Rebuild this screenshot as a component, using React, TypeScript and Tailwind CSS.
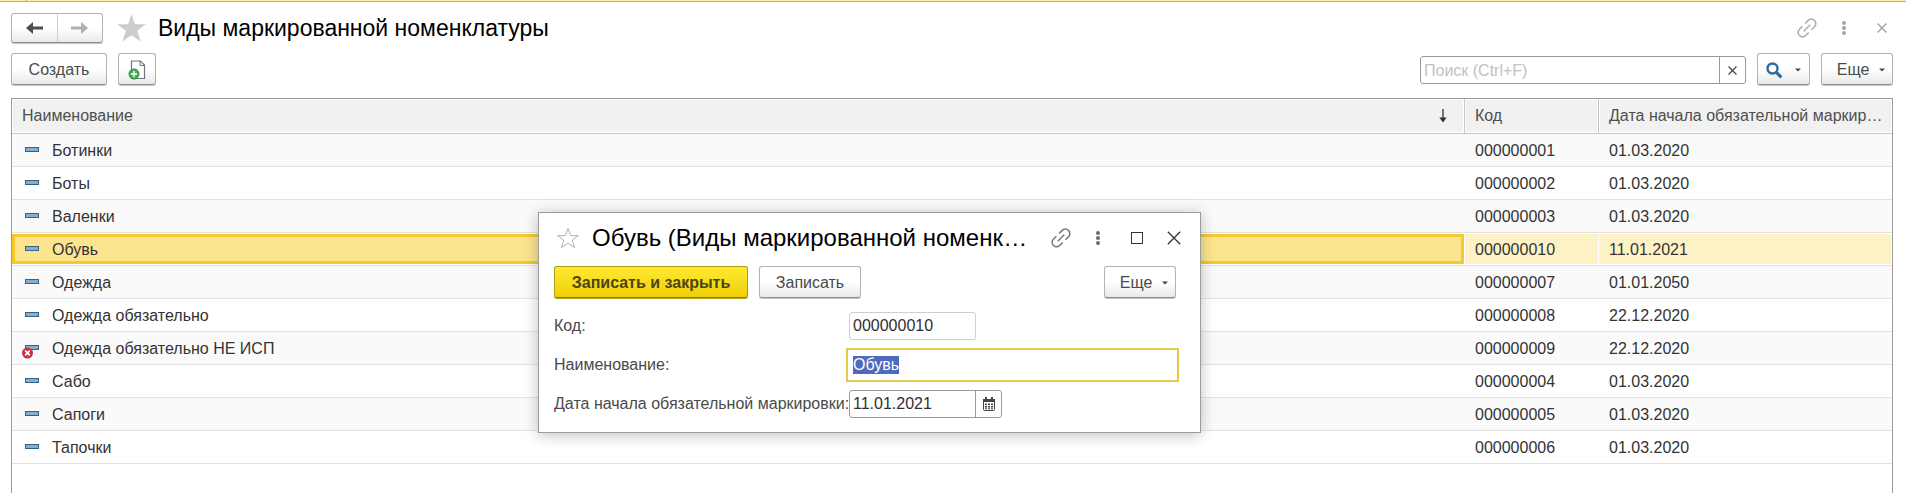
import { useEffect, useRef } from "react";
import type { ReactNode } from "react";

type Item = { name: string; code: string; date: string; disabled?: boolean };

const items: Item[] = [
  { name: "Ботинки", code: "000000001", date: "01.03.2020" },
  { name: "Боты", code: "000000002", date: "01.03.2020" },
  { name: "Валенки", code: "000000003", date: "01.03.2020" },
  { name: "Обувь", code: "000000010", date: "11.01.2021" },
  { name: "Одежда", code: "000000007", date: "01.01.2050" },
  { name: "Одежда обязательно", code: "000000008", date: "22.12.2020" },
  { name: "Одежда обязательно НЕ ИСП", code: "000000009", date: "22.12.2020", disabled: true },
  { name: "Сабо", code: "000000004", date: "01.03.2020" },
  { name: "Сапоги", code: "000000005", date: "01.03.2020" },
  { name: "Тапочки", code: "000000006", date: "01.03.2020" },
];
const selectedCode = "000000010";

const buttonFace =
  "rounded-[3px] border border-[#b3b3b3] border-b-[#8f8f8f] bg-linear-to-b from-white from-50% to-[#e9e9e9] shadow-[0_1px_0_#c4c4c4] text-[#4a4a4a]";

function Button({ label, className, children }: { label?: string; className: string; children: ReactNode }) {
  return (
    <button type="button" aria-label={label} className={`flex h-8 shrink-0 items-center justify-center pt-[2px] ${buttonFace} ${className}`}>
      {children}
    </button>
  );
}

function Arrow({ className }: { className: string }) {
  return (
    <svg className={className} width="17" height="12" viewBox="0 0 17 12">
      <path d="M0 6 7 0v4.500H17v3H7V12z" fill="currentColor" />
    </svg>
  );
}

function Caret() {
  return (
    <svg width="6" height="4" viewBox="0 0 6 4">
      <path d="M0 .5h6L3 3.500z" fill="#444" />
    </svg>
  );
}

function LinkIcon({ color }: { color: string }) {
  return (
    <svg width="20" height="20" viewBox="0 0 20 20" fill="none" stroke={color} strokeWidth="1.500">
      <path d="M8.200 5.400 11.200 2.400a4.400 4.400 0 0 1 6.300 0 4.400 4.400 0 0 1 0 6.300L14.500 11.700" />
      <path d="M5.400 8.200 2.400 11.200a4.400 4.400 0 0 0 0 6.300 4.400 4.400 0 0 0 6.300 0L11.700 14.500" />
      <path d="M6.800 13.200l6.400-6.400" />
    </svg>
  );
}

function DotsIcon({ color }: { color: string }) {
  return (
    <svg width="6" height="16" viewBox="0 0 6 16" fill={color}>
      <circle cx="3" cy="3" r="2" />
      <circle cx="3" cy="8" r="2" />
      <circle cx="3" cy="13" r="2" />
    </svg>
  );
}

function Cross({ size, color, width }: { size: number; color: string; width: number }) {
  return (
    <svg width={size} height={size} viewBox="0 0 12 12" stroke={color} strokeWidth={width} fill="none">
      <path d="M.7.7l10.600 10.600M11.300.7.7 11.300" />
    </svg>
  );
}

function NewDocIcon() {
  return (
    <svg width="18" height="20" viewBox="0 0 18 20" fill="none">
      <path d="M3.500 1h9l4 4v13.500h-13z" fill="#fff" stroke="#6a7683" strokeWidth="1.200" />
      <path d="M12 1v4.500h4.500" stroke="#6a7683" />
      <circle cx="6" cy="14" r="5" fill="#4aae57" stroke="#23903a" />
      <path d="M6 10.800v6.400M2.800 14h6.400" stroke="#fff" strokeWidth="1.300" />
    </svg>
  );
}

function SearchIcon() {
  return (
    <svg width="17" height="17" viewBox="0 0 17 17" fill="none" stroke="#2c6ca0">
      <circle cx="6.500" cy="6.500" r="5" strokeWidth="2.400" />
      <path d="m10.300 10.300 5 5" strokeWidth="3.200" />
    </svg>
  );
}

function ItemIcon({ disabled }: { disabled?: boolean }) {
  return (
    <svg className="shrink-0" width="18" height="20" viewBox="0 0 18 20">
      <rect x="3.500" y="6.500" width="13" height="4" fill="#86aed0" stroke="#38607f" />
      {disabled && (
        <>
          <circle cx="5.500" cy="14" r="5.500" fill="#c8323c" />
          <path d="m3.200 11.700 4.600 4.600M7.800 11.700l-4.600 4.600" stroke="#fff" strokeWidth="1.700" />
        </>
      )}
    </svg>
  );
}

function CalendarIcon() {
  return (
    <svg width="12" height="14" viewBox="0 0 12 14">
      <rect x=".5" y="2.500" width="11" height="11" rx="1" fill="#fff" stroke="#444" />
      <path d="M0 2h12v3H0zM2 0h2v3H2zM8 0h2v3H8z" fill="#444" />
      <path d="M2 6.500h2v1.500H2zM5 6.500h2v1.500H5zM8 6.500h2v1.500H8zM2 9h2v1.500H2zM5 9h2v1.500H5zM8 9h2v1.500H8zM2 11.300h2v1H2zM5 11.300h2v1H5zM8 11.300h2v1H8z" fill="#444" />
    </svg>
  );
}

function Row({ item, odd }: { item: Item; odd: boolean }) {
  const selected = item.code === selectedCode;
  const cell = `h-[33px] border-b border-[#e2e2e2] p-0 ${odd ? "bg-[#fafafa]" : "bg-white"}`;
  const fill = selected ? "my-px mr-px h-[30px] bg-[#fdf2c6]" : "h-8";
  return (
    <tr aria-selected={selected}>
      <td className={cell}>
        <div
          className={`flex items-center gap-3 pt-[2px] ${
            selected ? "my-px mr-px h-[30px] border-3 border-[#f4c92c] bg-[#fde58f] pl-[7px]" : "h-8 pl-[10px]"
          }`}
        >
          <ItemIcon disabled={item.disabled} />
          <span className="truncate">{item.name}</span>
        </div>
      </td>
      <td className={cell}>
        <div className={`flex items-center pt-[2px] pl-[10px] ${fill}`}>{item.code}</div>
      </td>
      <td className={cell}>
        <div className={`flex items-center pt-[2px] pl-[10px] ${fill}`}>{item.date}</div>
      </td>
    </tr>
  );
}

function EditDialog() {
  const nameRef = useRef<HTMLInputElement>(null);
  useEffect(() => {
    nameRef.current?.focus();
    nameRef.current?.select();
  }, []);

  return (
    <section
      role="dialog"
      aria-labelledby="dialog-title"
      className="absolute top-[212px] left-[538px] w-[663px] border border-[#9c9c9c] bg-white px-[15px] pt-[7px] pb-[9px] shadow-[0_2px_14px_rgba(0,0,0,0.25)]"
    >
      <header className="flex h-9 items-center pr-1">
        <button type="button" aria-label="Добавить в избранное" className="mr-3 ml-[2px]">
          <svg width="24" height="22" viewBox="0 0 24 22" fill="none" stroke="#b0b0b0">
            <path d="m12 1.500 2.600 7.200h7.800l-6.200 4.600 2.300 7.300L12 16.200l-6.500 4.400 2.300-7.300-6.200-4.600h7.800z" />
          </svg>
        </button>
        <h2 id="dialog-title" className="min-w-0 flex-1 truncate text-2xl text-black">
          Обувь (Виды маркированной номенклатуры)
        </h2>
        <div className="ml-5 flex items-center">
          <button type="button" aria-label="Получить ссылку" className="mr-6"><LinkIcon color="#777" /></button>
          <button type="button" aria-label="Меню" className="mr-[30px]"><DotsIcon color="#6b6b6b" /></button>
          <button type="button" aria-label="Развернуть" className="mr-6 size-3 border border-[#333]" />
          <button type="button" aria-label="Закрыть"><Cross size={14} color="#333" width={1.1} /></button>
        </div>
      </header>

      <div className="mt-[10px] flex items-center">
        <button
          type="button"
          className="mr-[11px] h-8 w-[194px] rounded-[3px] border border-[#b09c12] border-b-[#8a7a10] bg-linear-to-b from-[#ffe92e] to-[#efd000] pt-[2px] font-bold text-[#4c450f] shadow-[0_1px_0_#b5a52c]"
        >
          Записать и закрыть
        </button>
        <Button className="w-[102px]">Записать</Button>
        <Button className="mr-[9px] ml-auto w-[72px] gap-[10px] pl-2">Еще <Caret /></Button>
      </div>

      <form className="mt-2 grid grid-cols-[292px_1fr] items-center text-[#4a4a4a]">
        <label htmlFor="code" className="whitespace-nowrap">Код:</label>
        <div className="flex h-[39px] items-center pl-[3px]">
          <input id="code" readOnly value="000000010" className="h-7 w-[127px] rounded-[3px] border border-[#cfcfcf] px-[3px] text-[#2f2f2f] outline-none" />
        </div>
        <label htmlFor="name" className="whitespace-nowrap">Наименование:</label>
        <div className="flex h-[39px] items-center pr-[6px]">
          <input
            id="name"
            ref={nameRef}
            defaultValue="Обувь"
            className="h-[34px] w-full border-2 border-[#e6c84c] px-[5px] text-[#2f2f2f] outline-none selection:bg-[#4f69bd] selection:text-white"
          />
        </div>
        <label htmlFor="date" className="whitespace-nowrap">Дата начала обязательной маркировки:</label>
        <div className="flex h-[39px] items-center pl-[3px]">
          <div className="flex h-7 w-[153px] overflow-hidden rounded-[3px] border border-[#9a9a9a]">
            <input id="date" defaultValue="11.01.2021" className="min-w-0 flex-1 px-[3px] text-[#2f2f2f] outline-none" />
            <button type="button" aria-label="Выбрать дату" className="flex w-[26px] items-center justify-center border-l border-[#9a9a9a]">
              <CalendarIcon />
            </button>
          </div>
        </div>
      </form>
    </section>
  );
}

export default function App() {
  return (
    <div className="relative flex h-screen min-w-[1210px] flex-col overflow-hidden bg-white font-['Liberation_Sans',Arial,sans-serif] text-base leading-5 text-[#333]">
      <div className="flex h-[2px] shrink-0 border-b border-[#c9b559] bg-[#fbee9d]">
        <div className="w-[27px] border-r border-[#c9b559]" />
      </div>

      <header className="flex h-[51px] shrink-0 items-center pr-[19px] pl-[11px]">
        <div className={`flex h-[30px] w-[92px] shrink-0 ${buttonFace}`}>
          <button type="button" aria-label="Назад" className="flex flex-1 items-center justify-center border-r border-[#d0d0d0]">
            <Arrow className="text-[#4d4d4d]" />
          </button>
          <button type="button" aria-label="Вперед" className="flex flex-1 items-center justify-center">
            <Arrow className="rotate-180 text-[#b0b0b0]" />
          </button>
        </div>
        <button type="button" aria-label="Избранное" className="mr-3 ml-[14px] shrink-0">
          <svg width="29" height="28" viewBox="0 0 27 28" preserveAspectRatio="none">
            <path d="m13.500 0 3.200 10.300H27l-8.200 6.500 3.300 10.700-8.600-6.300-8.600 6.300 3.300-10.700L0 10.300h10.300z" fill="#cdcdcd" />
          </svg>
        </button>
        <h1 className="min-w-0 flex-1 truncate text-[23px] leading-7 text-black">Виды маркированной номенклатуры</h1>
        <div className="flex items-center">
          <button type="button" aria-label="Получить ссылку" className="mr-6"><LinkIcon color="#ababab" /></button>
          <button type="button" aria-label="Меню" className="mr-[30px]"><DotsIcon color="#a3a3a3" /></button>
          <button type="button" aria-label="Закрыть"><Cross size={10} color="#a8a8a8" width={1.8} /></button>
        </div>
      </header>

      <div className="flex h-[45px] shrink-0 items-start pr-[13px] pl-[11px]">
        <Button className="mr-[11px] w-24">Создать</Button>
        <Button label="Создать новый документ" className="w-[38px]"><NewDocIcon /></Button>
        <div className="mt-[3px] ml-auto flex h-7 w-[326px] overflow-hidden rounded-[3px] border border-[#9a9a9a]">
          <input
            type="text"
            aria-label="Поиск"
            placeholder="Поиск (Ctrl+F)"
            className="min-w-0 flex-1 px-[3px] pt-[2px] outline-none placeholder:text-[#c2c2c2]"
          />
          <button type="button" aria-label="Очистить" className="flex w-[26px] items-center justify-center border-l border-[#9a9a9a]">
            <Cross size={9} color="#444" width={1.6} />
          </button>
        </div>
        <Button label="Найти" className="ml-[11px] w-[53px] gap-3"><SearchIcon /><Caret /></Button>
        <Button className="ml-[11px] w-[72px] gap-[10px] pl-2">Еще <Caret /></Button>
      </div>

      <main className="mr-[13px] ml-[11px] flex-1 border border-b-0 border-[#9a9a9a]">
        <table className="w-full table-fixed border-separate border-spacing-0">
          <colgroup>
            <col />
            <col className="w-[134px]" />
            <col className="w-[293px]" />
          </colgroup>
          <thead>
            <tr className="text-left text-[#4f4f4f]">
              <th className="h-[35px] border-r border-b border-[#c6c6c6] p-px font-normal">
                <div className="flex h-8 items-center justify-between bg-[#f1f1f1] pr-4 pl-[9px]">
                  Наименование
                  <svg width="8" height="14" viewBox="0 0 8 14">
                    <path d="M4 0v12" stroke="#333" strokeWidth="1.300" />
                    <path d="M.3 8.500h7.400L4 13.500z" fill="#333" />
                  </svg>
                </div>
              </th>
              <th className="h-[35px] border-r border-b border-[#c6c6c6] p-px font-normal">
                <div className="flex h-8 items-center bg-[#f1f1f1] pl-[9px]">Код</div>
              </th>
              <th className="h-[35px] border-b border-[#c6c6c6] p-px font-normal">
                <div className="h-8 truncate bg-[#f1f1f1] pr-1 pl-[9px] leading-8">Дата начала обязательной маркировки</div>
              </th>
            </tr>
          </thead>
          <tbody>
            {items.map((item, i) => (
              <Row key={item.code} item={item} odd={i % 2 === 0} />
            ))}
          </tbody>
        </table>
      </main>

      <EditDialog />
    </div>
  );
}
